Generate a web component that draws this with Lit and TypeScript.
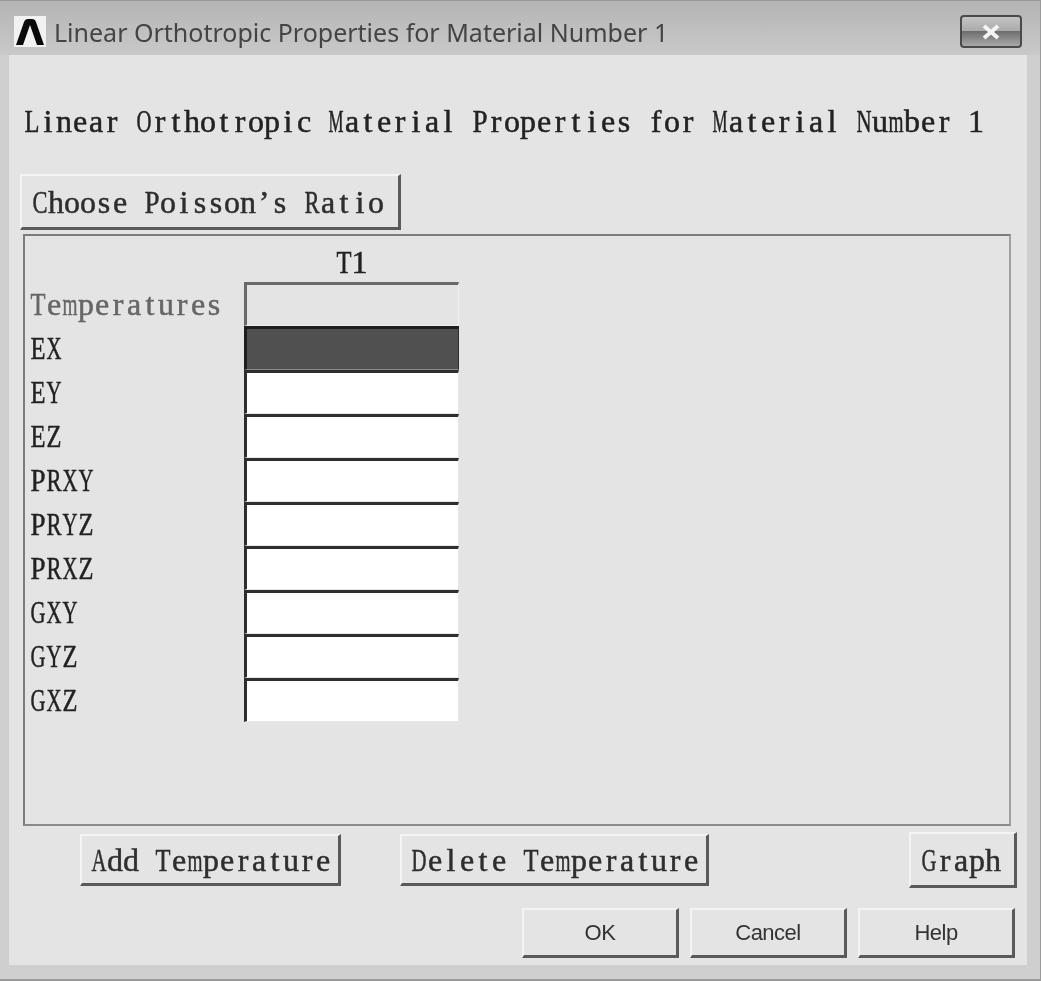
import { LitElement, html, css } from 'lit';
import { customElement } from 'lit/decorators.js';

const ROWS = ['EX', 'EY', 'EZ', 'PRXY', 'PRYZ', 'PRXZ', 'GXY', 'GYZ', 'GXZ'];

// the dialog font is a fixed pitch serif, none is installed, so every glyph of
// Liberation Serif goes in a 16px cell and the wide ones get squeezed to fit
const CELL = 16;
const FONT_SIZE = 32;
const WIDE: Record<string, number> = {
  A: 0.722, B: 0.667, C: 0.667, D: 0.722, E: 0.611, F: 0.556, G: 0.722, H: 0.722,
  K: 0.722, L: 0.611, M: 0.889, N: 0.722, O: 0.722, P: 0.556, R: 0.667, S: 0.556,
  T: 0.611, X: 0.722, Y: 0.722, Z: 0.611, m: 0.778, w: 0.722,
};

function squeeze(ch: string) {
  const w = WIDE[ch];
  return w ? `transform: scaleX(${((CELL - 1) / (w * FONT_SIZE)).toFixed(3)})` : '';
}

@customElement('app-root')
export class AppRoot extends LitElement {
  static styles = css`
    :host {
      display: block;
      width: 1041px;
      height: 981px;
      overflow: hidden;
    }

    .window {
      box-sizing: border-box;
      width: 1041px;
      height: 981px;
      display: flex;
      flex-direction: column;
      background: #cfcfcf;
      border: 1px solid #9a9a9a;
      border-width: 1px 1px 2px 0;
      filter: blur(0.7px);
    }

    /* title bar */
    .titlebar {
      box-sizing: border-box;
      height: 54px;
      flex: none;
      display: flex;
      align-items: center;
      padding: 7px 18px 0 14px;
      background: linear-gradient(#b4b4b4, #c9c9c9);
    }

    .logo {
      width: 32px;
      height: 31px;
      background: #f2f2f2;
      display: flex;
      align-items: center;
      justify-content: center;
      flex: none;
    }

    .title {
      margin-left: 8px;
      flex: 1;
      font: 25px 'Noto Sans', sans-serif;
      color: #444;
      white-space: nowrap;
    }

    .close {
      box-sizing: border-box;
      width: 62px;
      height: 33px;
      border: 2px solid #4a4a4a;
      border-radius: 4px;
      background: linear-gradient(#c4c4c4 0, #aaa 48%, #6e6e6e 50%, #a8a8a8 100%);
      display: flex;
      align-items: center;
      justify-content: center;
    }

    /* dialog body */
    .client {
      flex: 1;
      margin: 0 13px 14px 9px;
      background: #e4e4e4;
      display: flex;
      flex-direction: column;
    }

    .mono {
      display: inline-flex;
      font: 32px/1 'Liberation Serif', serif;
      -webkit-text-stroke: 0.5px currentColor;
      white-space: nowrap;
      color: #222;
    }

    .ch {
      flex: none;
      display: flex;
      justify-content: center;
      width: 16px;
      white-space: pre;
    }

    .heading {
      height: 32px;
      margin: 50px 0 0 15px;
    }

    .btn {
      box-sizing: border-box;
      flex: none;
      display: flex;
      align-items: center;
      background: #e4e4e4;
      border-style: solid;
      border-width: 2px 3px 3px 2px;
      border-color: #f4f4f4 #5a5a5a #5a5a5a #f4f4f4;
      overflow: hidden;
    }

    .btn .mono {
      color: #2e2e2e;
    }

    .choose {
      width: 381px;
      height: 56px;
      margin: 37px 0 0 11px;
      padding: 1px 0 0 10px;
    }

    /* table panel */
    .panel {
      box-sizing: border-box;
      width: 988px;
      height: 592px;
      margin: 4px 0 0 14px;
      border: 2px solid;
      border-color: #7c7c7c #a0a0a0 #8a8a8a #7c7c7c;
      padding: 10px 0 0 5px;
      display: grid;
      grid-template-columns: 214px 215px;
      grid-template-rows: 36px;
      grid-auto-rows: 44px;
      align-content: start;
    }

    .t1 {
      grid-column: 2;
      display: flex;
      justify-content: center;
    }

    .label {
      display: flex;
      align-items: center;
      overflow: hidden;
    }

    .label.dim .mono {
      color: #666;
    }

    .cell {
      box-sizing: border-box;
      border-style: solid;
      border-width: 3px 1px 1px 3px;
      border-color: #2e2e2e #e8e8e8 #e8e8e8 #2e2e2e;
      background: #fff;
    }

    .cell.disabled {
      background: #e4e4e4;
      border-color: #6a6a6a #f0f0f0 #f0f0f0 #6a6a6a;
    }

    .cell.active {
      background: #505050;
      border-color: #1e1e1e #2e2e2e #8a8a8a #1e1e1e;
    }

    /* bottom buttons */
    .row {
      display: flex;
      align-items: flex-end;
      margin: 6px 0 0 71px;
      height: 56px;
    }

    .add {
      width: 261px;
      height: 52px;
      padding: 1px 0 0 9px;
      margin-bottom: 2px;
    }

    .del {
      width: 309px;
      height: 52px;
      padding: 1px 0 0 9px;
      margin: 0 0 2px 59px;
    }

    .graph {
      width: 108px;
      height: 56px;
      padding: 1px 0 0 10px;
      margin-left: auto;
      margin-right: 10px;
    }

    .actions {
      display: flex;
      justify-content: flex-end;
      gap: 11px;
      margin: 20px 12px 0 0;
    }

    .action {
      width: 157px;
      height: 50px;
      justify-content: center;
      font: 22px 'Liberation Sans', sans-serif;
      letter-spacing: -0.5px;
      color: #333;
    }
  `;

  private mono(text: string) {
    return html`<span class="mono">${[...text].map(
      (ch) => html`<span class="ch" style=${squeeze(ch)}>${ch}</span>`
    )}</span>`;
  }

  render() {
    return html`
      <div class="window">
        <div class="titlebar">
          <div class="logo">
            <svg width="30" height="28" viewBox="0 0 30 28">
              <path d="M1 27 L9 4 Q10 1 13 1 H17 Q20 1 21 4 L29 27 H22 L15 7 L8 27 Z" fill="#0a0a0a"></path>
            </svg>
          </div>
          <div class="title">Linear Orthotropic Properties for Material Number 1</div>
          <div class="close">
            <svg width="22" height="16" viewBox="0 0 22 16">
              <path d="M4 2 L18 14 M18 2 L4 14" stroke="#f4f4f4" stroke-width="4" fill="none"></path>
            </svg>
          </div>
        </div>
        <div class="client">
          <div class="heading">${this.mono('Linear Orthotropic Material Properties for Material Number 1')}</div>
          <div class="btn choose">${this.mono('Choose Poisson’s Ratio')}</div>
          <div class="panel">
            <div class="t1">${this.mono('T1')}</div>
            <div class="label dim">${this.mono('Temperatures')}</div>
            <div class="cell disabled"></div>
            ${ROWS.map(
              (name) => html`
                <div class="label">${this.mono(name)}</div>
                <div class="cell ${name === 'EX' ? 'active' : ''}"></div>
              `
            )}
          </div>
          <div class="row">
            <div class="btn add">${this.mono('Add Temperature')}</div>
            <div class="btn del">${this.mono('Delete Temperature')}</div>
            <div class="btn graph">${this.mono('Graph')}</div>
          </div>
          <div class="actions">
            <div class="btn action">OK</div>
            <div class="btn action">Cancel</div>
            <div class="btn action">Help</div>
          </div>
        </div>
      </div>
    `;
  }
}
